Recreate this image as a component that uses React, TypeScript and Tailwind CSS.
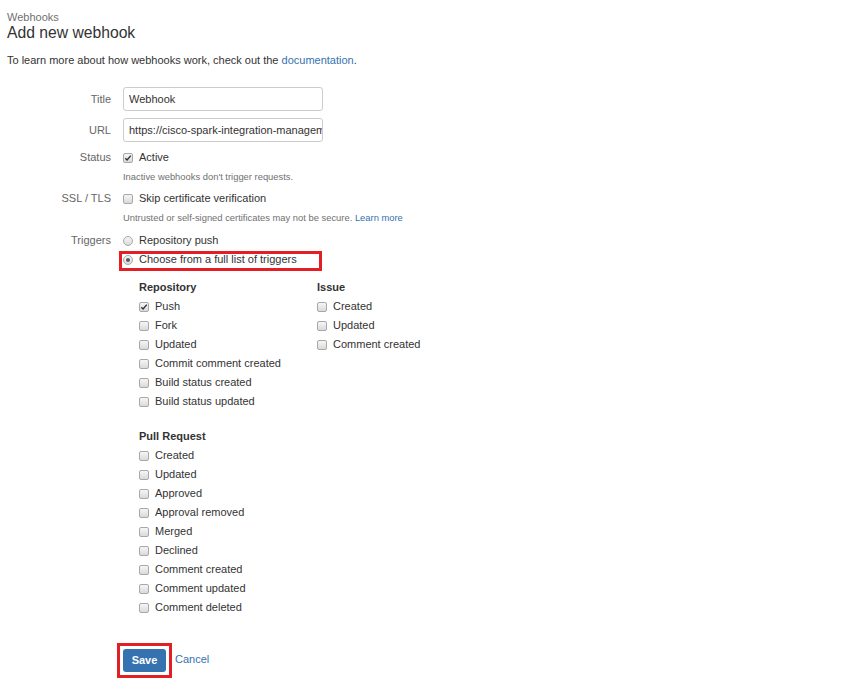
import React from "react";

const repoTriggers = [
  { label: "Push", checked: true },
  { label: "Fork" },
  { label: "Updated" },
  { label: "Commit comment created" },
  { label: "Build status created" },
  { label: "Build status updated" },
];

const issueTriggers = [{ label: "Created" }, { label: "Updated" }, { label: "Comment created" }];

const prTriggers = [
  "Created",
  "Updated",
  "Approved",
  "Approval removed",
  "Merged",
  "Declined",
  "Comment created",
  "Comment updated",
  "Comment deleted",
];

function Box({ checked }: { checked?: boolean }) {
  return (
    <span className="w-[10px] h-[10px] shrink-0 rounded-[2px] border border-[#a8a8a8] bg-linear-to-b from-[#f6f6f6] to-[#dadada] flex items-center justify-center">
      {checked && (
        <svg width="8" height="8" viewBox="0 0 8 8">
          <path d="M1.3 4.2 L3.1 6 L6.8 1.6" fill="none" stroke="#333" strokeWidth="1.4" />
        </svg>
      )}
    </span>
  );
}

function Radio({ selected }: { selected?: boolean }) {
  return (
    <span className="w-[10px] h-[10px] shrink-0 rounded-full border border-[#a8a8a8] bg-linear-to-b from-[#f6f6f6] to-[#dadada] flex items-center justify-center">
      {selected && <span className="w-[4px] h-[4px] rounded-full bg-[#5a5a5a]" />}
    </span>
  );
}

function Check({ label, checked }: { label: string; checked?: boolean }) {
  return (
    <div className="flex items-center h-[19px] gap-[6px]">
      <Box checked={checked} />
      <span>{label}</span>
    </div>
  );
}

function Row({ label, children, className = "" }: { label?: string; children: React.ReactNode; className?: string }) {
  return (
    <div className={"flex " + className}>
      <div className="w-[104px] shrink-0 text-right text-[#666] h-[19px] leading-[19px]">{label}</div>
      <div className="ml-[12px] flex-1">{children}</div>
    </div>
  );
}

export default function App() {
  return (
    <div
      className="w-[865px] h-[681px] bg-white text-[#333] text-[11px] pl-[7px] pt-[10px] overflow-hidden"
      style={{ fontFamily: '"Liberation Sans", Arial, sans-serif' }}
    >
      <div className="h-[14px] leading-[14px] text-[#707070]">Webhooks</div>
      <h1 className="h-[18px] leading-[18px] text-[15.7px]">Add new webhook</h1>
      <p className="mt-[11px] h-[14px] leading-[14px]">
        To learn more about how webhooks work, check out the <a className="text-[#3572b0]">documentation</a>.
      </p>

      <div className="mt-[20px]">
        <div className="flex items-center">
          <div className="w-[104px] text-right text-[#666]">Title</div>
          <input
            className="ml-[12px] w-[200px] h-[24px] border border-[#ccc] rounded-[3px] pl-[5px] text-[11px] text-[#333] outline-none"
            defaultValue="Webhook"
          />
        </div>
        <div className="flex items-center mt-[7px]">
          <div className="w-[104px] text-right text-[#666]">URL</div>
          <input
            className="ml-[12px] w-[200px] h-[24px] border border-[#ccc] rounded-[3px] pl-[5px] pr-0 text-[11px] text-[#333] outline-none"
            defaultValue="https://cisco-spark-integration-management.example"
          />
        </div>

        <Row label="Status" className="mt-[6px]">
          <div className="flex items-center h-[19px] gap-[6px]">
            <Box checked />
            <span>Active</span>
          </div>
          <div className="h-[19px] leading-[19px] text-[9.4px] text-[#707070]">Inactive webhooks don't trigger requests.</div>
        </Row>

        <Row label="SSL / TLS" className="mt-[3px]">
          <div className="flex items-center h-[19px] gap-[6px]">
            <Box />
            <span>Skip certificate verification</span>
          </div>
          <div className="h-[19px] leading-[19px] text-[9.4px] text-[#707070]">
            Untrusted or self-signed certificates may not be secure. <a className="text-[#3572b0]">Learn more</a>
          </div>
        </Row>

        <Row label="Triggers" className="mt-[4px]">
          <div className="flex items-center h-[19px] gap-[6px]">
            <Radio />
            <span>Repository push</span>
          </div>
          <div className="relative flex items-center h-[19px] gap-[6px]">
            <span className="absolute left-[-4px] top-[1px] w-[203px] h-[20px] border-[3px] border-[#e31e24]" />
            <Radio selected />
            <span>Choose from a full list of triggers</span>
          </div>

          <div className="ml-[16px] mt-[9px]">
            <div className="flex">
              <div className="w-[178px]">
                <div className="h-[19px] leading-[19px] font-bold">Repository</div>
                {repoTriggers.map((t) => (
                  <Check key={t.label} label={t.label} checked={t.checked} />
                ))}
              </div>
              <div>
                <div className="h-[19px] leading-[19px] font-bold">Issue</div>
                {issueTriggers.map((t) => (
                  <Check key={t.label} label={t.label} />
                ))}
              </div>
            </div>
            <div className="mt-[16px]">
              <div className="h-[19px] leading-[19px] font-bold">Pull Request</div>
              {prTriggers.map((t) => (
                <Check key={t} label={t} />
              ))}
            </div>
          </div>
        </Row>

        <div className="flex items-center mt-[26px] ml-[110px]">
          <div className="border-[3px] border-[#e31e24] p-[3px]">
            <button className="w-[43px] h-[23px] rounded-[3px] bg-[#3572b0] text-white font-bold text-[11px]">Save</button>
          </div>
          <a className="ml-[3px] mb-[3px] text-[#3572b0]">Cancel</a>
        </div>
      </div>
    </div>
  );
}
